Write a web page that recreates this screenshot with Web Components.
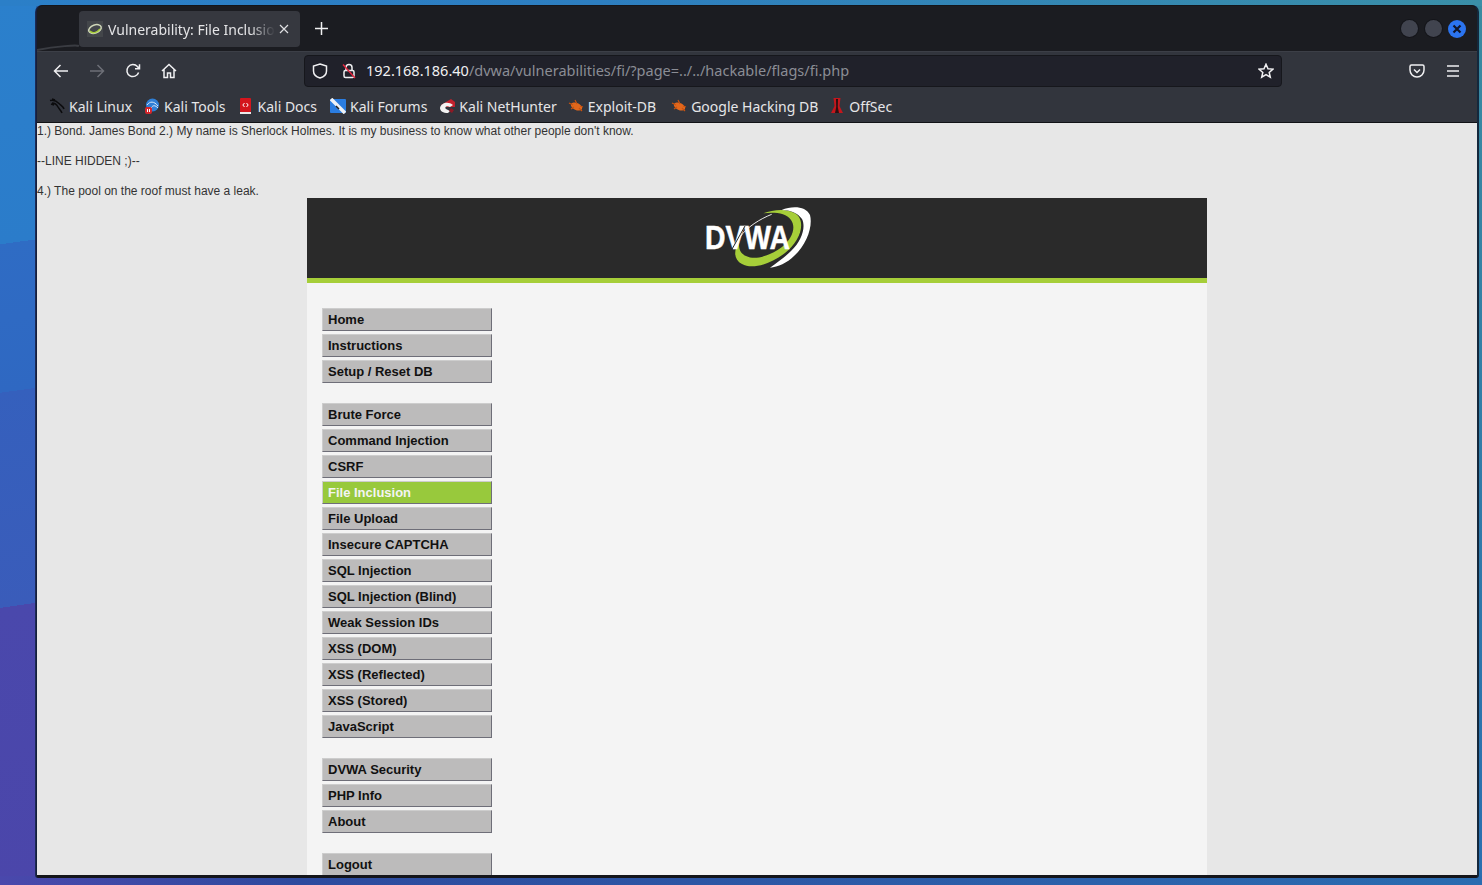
<!DOCTYPE html>
<html>
<head>
<meta charset="utf-8">
<title>Vulnerability: File Inclusion</title>
<style>
    html, body { margin: 0; height: 100%; overflow: hidden; }
    body {
        box-sizing: border-box;
        height: 885px;
        padding: 5px 4px 7px 36px;
        background-color: #2a6cb0;
        background-repeat: no-repeat;
        background-image:
            linear-gradient(to right, #2b7fc8 0, #2d7ec0 600px, #3a8fa8 100%),
            linear-gradient(to right, #4a48ac 0, #2d4a9e 300px, #2a6cb0 100%),
            linear-gradient(to bottom, #3a8ba0 0, #2a6fb0 100%),
            linear-gradient(172deg, #2b80cc 0, #2b7cca 242px, #2f6cc4 242px, #2f68c2 389px, #3560bd 389px, #3a5cba 602px, #4a48ac 602px, #4b46aa 100%);
        background-size: 100% 6px, 100% 9px, 5px 100%, 36px 100%;
        background-position: top left, bottom left, top right, top left;
    }
    .gap-forums { margin-left: 1px; }
    .gap-net { margin-right: -1px; }
    .gap-exploit { margin-right: 3px; }
    .gap-ghdb { margin-right: -1px; }
</style>
</head>
<body>
<browser-window>
    <browser-tabstrip title-text="Vulnerability: File Inclusion"></browser-tabstrip>
    <browser-toolbar></browser-toolbar>
    <bookmark-bar>
        <bookmark-item icon="kali">Kali Linux</bookmark-item>
        <bookmark-item icon="tools">Kali Tools</bookmark-item>
        <bookmark-item icon="docs">Kali Docs</bookmark-item>
        <bookmark-item icon="forums" class="gap-forums">Kali Forums</bookmark-item>
        <bookmark-item icon="nethunter" class="gap-net">Kali NetHunter</bookmark-item>
        <bookmark-item icon="exploit" class="gap-exploit">Exploit-DB</bookmark-item>
        <bookmark-item icon="exploit" class="gap-ghdb">Google Hacking DB</bookmark-item>
        <bookmark-item icon="offsec">OffSec</bookmark-item>
    </bookmark-bar>
    <dvwa-page>
        <span slot="raw">1.) Bond. James Bond 2.) My name is Sherlock Holmes. It is my business to know what other people don't know.<br><br>--LINE HIDDEN ;)--<br><br>4.) The pool on the roof must have a leak.</span>
        <dvwa-menu-block>
            <dvwa-menu-item>Home</dvwa-menu-item>
            <dvwa-menu-item>Instructions</dvwa-menu-item>
            <dvwa-menu-item>Setup / Reset DB</dvwa-menu-item>
        </dvwa-menu-block>
        <dvwa-menu-block>
            <dvwa-menu-item>Brute Force</dvwa-menu-item>
            <dvwa-menu-item>Command Injection</dvwa-menu-item>
            <dvwa-menu-item>CSRF</dvwa-menu-item>
            <dvwa-menu-item selected>File Inclusion</dvwa-menu-item>
            <dvwa-menu-item>File Upload</dvwa-menu-item>
            <dvwa-menu-item>Insecure CAPTCHA</dvwa-menu-item>
            <dvwa-menu-item>SQL Injection</dvwa-menu-item>
            <dvwa-menu-item>SQL Injection (Blind)</dvwa-menu-item>
            <dvwa-menu-item>Weak Session IDs</dvwa-menu-item>
            <dvwa-menu-item>XSS (DOM)</dvwa-menu-item>
            <dvwa-menu-item>XSS (Reflected)</dvwa-menu-item>
            <dvwa-menu-item>XSS (Stored)</dvwa-menu-item>
            <dvwa-menu-item>JavaScript</dvwa-menu-item>
        </dvwa-menu-block>
        <dvwa-menu-block>
            <dvwa-menu-item>DVWA Security</dvwa-menu-item>
            <dvwa-menu-item>PHP Info</dvwa-menu-item>
            <dvwa-menu-item>About</dvwa-menu-item>
        </dvwa-menu-block>
        <dvwa-menu-block>
            <dvwa-menu-item>Logout</dvwa-menu-item>
        </dvwa-menu-block>
    </dvwa-page>
</browser-window>

<script>
const UI_FONT = '"Noto Sans", "Open Sans", sans-serif';

class BrowserWindow extends HTMLElement {
    constructor() {
        super();
        this.attachShadow({ mode: "open" }).innerHTML = `
            <style>
                :host {
                    display: flex;
                    flex-direction: column;
                    box-sizing: border-box;
                    height: 873px;
                    overflow: hidden;
                    border-radius: 7px 7px 3px 3px;
                    border: 1px solid #14151a;
                    border-width: 1px 1px 3px 1px;
                    border-left-color: #151f3c;
                    border-right-color: #14283c;
                    box-shadow: -1px 0 0 #1c2a55, 1px 0 0 #14283c;
                    background: #1b1c21;
                }
            </style>
            <slot></slot>
        `;
    }
}

class BrowserTabstrip extends HTMLElement {
    constructor() {
        super();
        const titulo = this.getAttribute("title-text") || "";
        this.attachShadow({ mode: "open" }).innerHTML = `
            <style>
                :host {
                    display: flex;
                    align-items: center;
                    flex: none;
                    position: relative;
                    box-sizing: border-box;
                    height: 45px;
                    padding: 0 11px 0 42px;
                    background: #1b1c21;
                    font: 14px ${UI_FONT};
                    color: #e4e4e6;
                }
                .swoosh { position: absolute; left: 0; top: 0; }
                .tab {
                    position: relative;
                    display: flex;
                    align-items: center;
                    box-sizing: border-box;
                    width: 221px;
                    height: 36px;
                    margin-top: 1px;
                    padding: 0 8px;
                    border-radius: 4px;
                    background: #36383f;
                }
                .fav { width: 16px; height: 16px; flex: none; margin-right: 5px; }
                .label {
                    flex: 1;
                    min-width: 0;
                    white-space: nowrap;
                    overflow: hidden;
                    -webkit-mask-image: linear-gradient(to right, #000 85%, transparent 100%);
                    mask-image: linear-gradient(to right, #000 85%, transparent 100%);
                }
                .close { width: 10px; height: 10px; flex: none; margin: 0 3px 0 4px; }
                .plus { width: 13px; height: 13px; margin-left: 15px; }
                .spacer { flex: 1; }
                .ctl {
                    width: 17px; height: 17px;
                    border-radius: 50%;
                    background: #41444f;
                    box-shadow: 0 0 0 1px #14151a;
                    margin-left: 7px;
                }
                .ctl.close-win { background: #2b74f0; display: flex; align-items: center; justify-content: center; box-shadow: none; margin-left: 6px; width: 18px; height: 18px; }
            </style>
            <svg class="swoosh" width="90" height="45"><path d="M0 44 C20 40 40 39 42 40" stroke="#3a3c42" stroke-width="2" fill="none"/></svg>
            <div class="tab">
                <svg class="fav" viewBox="0 0 16 16"><rect width="16" height="16" fill="#43464a"/><ellipse cx="8" cy="8" rx="6.5" ry="4" transform="rotate(-20 8 8)" fill="none" stroke="#cfd6b8" stroke-width="1.5"/><path d="M3 10 C5 13 10 12 13 8" fill="none" stroke="#a6ce39" stroke-width="1.4"/></svg>
                <span class="label">${titulo}</span>
                <svg class="close" viewBox="0 0 10 10"><path d="M1 1 9 9M9 1 1 9" stroke="#dfdfe2" stroke-width="1.2"/></svg>
            </div>
            <svg class="plus" viewBox="0 0 13 13"><path d="M6.5 0v13M0 6.5h13" stroke="#f0f0f2" stroke-width="1.5"/></svg>
            <div class="spacer"></div>
            <div class="ctl"></div>
            <div class="ctl"></div>
            <div class="ctl close-win"><svg width="10" height="10" viewBox="0 0 10 10"><path d="M1.5 1.5 8.5 8.5M8.5 1.5 1.5 8.5" stroke="#10162a" stroke-width="2.2"/></svg></div>
        `;
    }
}

class BrowserToolbar extends HTMLElement {
    constructor() {
        super();
        this.attachShadow({ mode: "open" }).innerHTML = `
            <style>
                :host {
                    display: flex;
                    align-items: center;
                    flex: none;
                    box-sizing: border-box;
                    height: 37px;
                    padding: 2px 16px 0 16px;
                    background: #32353d;
                    border-top: 1px solid #3c3f47;
                    font: 14.5px ${UI_FONT};
                }
                svg { flex: none; fill: none; stroke: #f0f0f2; stroke-width: 1.5; }
                .nav { width: 16px; height: 16px; margin-right: 20px; }
                .off { stroke: #6d6f77; }
                .url {
                    flex: none;
                    display: flex;
                    align-items: center;
                    box-sizing: border-box;
                    width: 978px;
                    height: 32px;
                    margin-left: 127px;
                    padding: 0 8px;
                    border: 1px solid #16171c;
                    border-radius: 4px;
                    background: #20212a;
                    color: #f0f0f2;
                }
                .url span { color: #8b8d95; }
                .text { flex: 1; margin-left: 9px; padding-bottom: 2px; white-space: nowrap; }
                .i16 { width: 16px; height: 16px; }
                .shield { margin-left: -1px; margin-right: 1px; }
                .lock { margin-left: 12px; }
                .star { margin-right: -1px; }
                .right { width: 16px; height: 16px; margin-left: 20px; }
            </style>
            <svg class="nav" viewBox="0 0 16 16"><path d="M15 8H1.5M7.5 2 1.5 8l6 6"/></svg>
            <svg class="nav off" viewBox="0 0 16 16"><path d="M1 8h13.5M8.5 2l6 6-6 6"/></svg>
            <svg class="nav" viewBox="0 0 16 16"><path d="M13.6 9.5A6 6 0 1 1 12.4 3.6L14.5 5.5M14.5 1.2v4.5H10"/></svg>
            <svg class="nav" style="margin-right:0" viewBox="0 0 16 16"><path d="M1 8 8 1.5 15 8M3 6.5V14.5h3.5v-4.5h3v4.5H13V6.5"/></svg>
            <div class="url">
                <svg class="i16 shield" viewBox="0 0 16 16"><path d="M8 1 14.5 3v5c0 3.5-3 6-6.5 7C4.500 14 1.500 11.500 1.500 8V3Z"/></svg>
                <svg class="i16 lock" viewBox="0 0 16 16"><rect x="3" y="7.500" width="10" height="7" rx="1.500"/><path d="M5 7.500V4.500a3 3 0 0 1 6 0v3"/><path d="M2 1.500 14 15" stroke="#e2263f"/></svg>
                <div class="text">192.168.186.40<span>/dvwa/vulnerabilities/fi/?page=../../hackable/flags/fi.php</span></div>
                <svg class="i16 star" viewBox="0 0 16 16"><path d="M8 1.200 10 5.700l4.900.5-3.700 3.200 1.100 4.800L8 11.700 3.700 14.200l1.100-4.800L1.100 6.200 6 5.700Z"/></svg>
            </div>
            <div style="flex:1"></div>
            <svg class="right" viewBox="0 0 16 16"><path d="M2.500 2h11A1.500 1.500 0 0 1 15 3.500V7A7 7 0 0 1 1 7V3.500A1.500 1.500 0 0 1 2.500 2Z"/><path d="M5 6.500 8 9.500 11 6.500"/></svg>
            <svg class="right" viewBox="0 0 16 16"><path d="M2 3h12M2 8h12M2 13h12"/></svg>
        `;
    }
}

class BookmarkBar extends HTMLElement {
    constructor() {
        super();
        this.attachShadow({ mode: "open" }).innerHTML = `
            <style>
                :host {
                    display: flex;
                    align-items: center;
                    flex: none;
                    box-sizing: border-box;
                    height: 35px;
                    padding: 2px 0 0 12px;
                    gap: 12px;
                    background: #32353d;
                    border-bottom: 1px solid #111216;
                }
            </style>
            <slot></slot>
        `;
    }
}

const BOOKMARK_ICONS = {
    kali: `<path d="M1 2.500C5 1.500 8 3.500 10 5.500 12 7.500 14 8 15 11M3 5C6 5 8 7 9 9 10 11 12 12 13 15M5 7 2 6M6 2 3 1" fill="none" stroke="#0b0b0d" stroke-width="1.500"/>`,
    tools: `<circle cx="8.500" cy="7" r="6.500" fill="#2f7fd6"/><path d="M3 7C6 3 10 3 14 8M7 10C9 7 11 7 14 10" fill="none" stroke="#dbe9f7" stroke-width="1"/><rect x="1" y="9" width="7" height="7" rx="2" fill="#d5262c"/><path d="M3.500 11v3M5.500 11v3" stroke="#fff"/>`,
    docs: `<rect x="2" y="0" width="11" height="14" rx="1" fill="#d4151d"/><rect x="2" y="14" width="11" height="2" fill="#e9e9e9"/><path d="M6.500 5 4.800 7l1.700 2M8.500 5l1.700 2-1.700 2" fill="none" stroke="#fff"/>`,
    forums: `<rect x="0" y="1" width="16" height="14" rx="1" fill="#2a7de1"/><path d="M1 1 15 15" stroke="#eef2f6" stroke-width="3.500"/><path d="M6 8 9 11" stroke="#222" stroke-width="1.500"/>`,
    nethunter: `<path d="M2 7 12 1 16 4 16 9 8 9Z" fill="#c2222e"/><path d="M1 10C2 5 9 3 14 7L11 9C8 7 5 9 7 11L11 13 9 15C4 15 1 13 1 10Z" fill="#f2f2f2"/><path d="M12 10 15 12 13 15 10 13Z" fill="#8d1a25"/>`,
    exploit: `<ellipse cx="8.500" cy="8.500" rx="6" ry="3.500" transform="rotate(25 8.500 8.500)" fill="#e2671c"/><path d="M1 5 5 7M3 11 6 9M7 2 9 6M14 13 11 10M15 9 12 8" stroke="#c9530f" stroke-width="1.200"/>`,
    offsec: `<path d="M4.500 0H11.500L10.500 8 14 15H2L5.500 8Z" fill="#c4161c"/><path d="M7 1H9L8.800 9 10 15H6L7.200 9Z" fill="#2c1012"/>`
};

class BookmarkItem extends HTMLElement {
    constructor() {
        super();
        const icon = BOOKMARK_ICONS[this.getAttribute("icon")] || "";
        this.attachShadow({ mode: "open" }).innerHTML = `
            <style>
                :host {
                    display: inline-flex;
                    align-items: center;
                    gap: 4px;
                    white-space: nowrap;
                    font: 14px ${UI_FONT};
                    color: #e6e6e8;
                }
                svg { width: 16px; height: 16px; flex: none; }
            </style>
            <svg viewBox="0 0 16 16">${icon}</svg>
            <slot></slot>
        `;
    }
}

class DvwaPage extends HTMLElement {
    constructor() {
        super();
        this.attachShadow({ mode: "open" }).innerHTML = `
            <style>
                :host {
                    display: block;
                    flex: 1;
                    min-height: 0;
                    overflow: hidden;
                    background: #e7e7e7;
                    color: #333;
                    font: 12px/15px "Liberation Sans", Arial, sans-serif;
                }
                ::slotted(span) {
                    display: block;
                    box-sizing: border-box;
                    height: 75px;
                    padding-top: 1px;
                }
                .wrap {
                    box-sizing: border-box;
                    width: 900px;
                    margin: 0 auto;
                    background: #f4f4f4;
                }
                header {
                    display: flex;
                    align-items: center;
                    justify-content: center;
                    box-sizing: border-box;
                    height: 85px;
                    background: #2a2a2a;
                    border-bottom: 5px solid #a6ce39;
                }
                nav {
                    width: 170px;
                    padding: 25px 0 0 15px;
                }
            </style>
            <slot name="raw"></slot>
            <div class="wrap">
                <header>
                    <svg width="115" height="66" viewBox="0 0 115 66">
                        <path d="M71.700 9.300C60 14 47 22 40 32 36 40 37 46 42 50" fill="none" stroke="#e9e9e9" stroke-width="1"/>
                        <path d="M63.300 8.300C75 3.500 93 3 99 12 105 22 98 38 85 48 71 59 52 65 42 59 34 55 33 46 39.300 36.700 38 44 41 49 46 51 56 56 71 50 82 42 93 33 96 22 91 15 86 8 75 7 63.300 8.300Z" fill="#a6ce39"/>
                        <path d="M81.700 5C92 .500 106 1 110 10 113 21 107 39 94 51 87 58 78 62 70 62.700 78 57 85 52 91 46 102 36 106 22 102 14 98 8 90 5 81.700 5Z" fill="#fff"/>
                        <text x="5" y="44" font-family="Liberation Sans, Arial, sans-serif" font-weight="700" font-size="33" fill="#fff" stroke="#fff" stroke-width=".5" textLength="85" lengthAdjust="spacingAndGlyphs">DVWA</text>
                        <path d="M31 46 45 21" stroke="#2a2a2a" stroke-width="1" fill="none"/>
                    </svg>
                </header>
                <nav><slot></slot></nav>
            </div>
        `;
    }
}

class DvwaMenuBlock extends HTMLElement {
    constructor() {
        super();
        this.attachShadow({ mode: "open" }).innerHTML = `
            <style>
                :host {
                    display: flex;
                    flex-direction: column;
                    gap: 3px;
                    margin-bottom: 20px;
                }
            </style>
            <slot></slot>
        `;
    }
}

class DvwaMenuItem extends HTMLElement {
    constructor() {
        super();
        this.attachShadow({ mode: "open" }).innerHTML = `
            <style>
                :host {
                    display: flex;
                    align-items: center;
                    box-sizing: border-box;
                    width: 170px;
                    height: 23px;
                    padding: 0 0 0 5px;
                    background: #bcbbbb;
                    border-top: 1px solid #cdcdcd;
                    border-left: 1px solid #cdcdcd;
                    border-right: 1px solid #6e6e78;
                    border-bottom: 1px solid #6e6e78;
                    color: #111;
                    font: bold 13px "Liberation Sans", Arial, sans-serif;
                    white-space: nowrap;
                }
                :host([selected]) {
                    background: #98c93c;
                    color: #f4f4f4;
                }
            </style>
            <slot></slot>
        `;
    }
}

customElements.define("browser-window", BrowserWindow);
customElements.define("browser-tabstrip", BrowserTabstrip);
customElements.define("browser-toolbar", BrowserToolbar);
customElements.define("bookmark-bar", BookmarkBar);
customElements.define("bookmark-item", BookmarkItem);
customElements.define("dvwa-page", DvwaPage);
customElements.define("dvwa-menu-block", DvwaMenuBlock);
customElements.define("dvwa-menu-item", DvwaMenuItem);
</script>
</body>
</html>
